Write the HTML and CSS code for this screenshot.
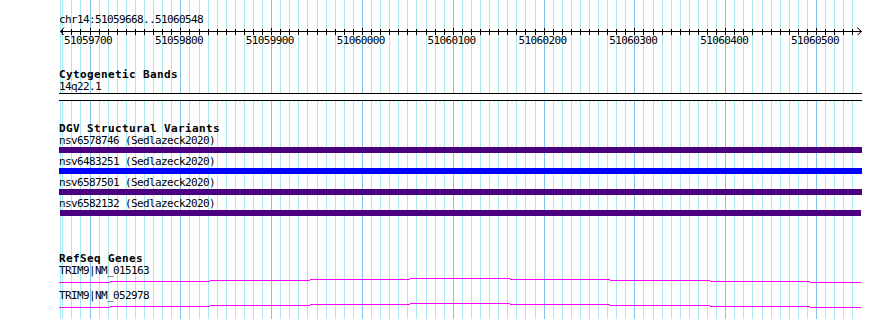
FILE: index.html
```html
<!DOCTYPE html>
<html>
<head>
<meta charset="utf-8">
<link rel="stylesheet" href="styles.css">
</head>
<body>
<div class="browser">
  <svg class="grid" width="890" height="319" viewBox="0 0 890 319" shape-rendering="crispEdges">
    <path class="minor" d="M60.5 0V319M62.5 0V319M71.5 0V319M80.5 0V319M99.5 0V319M108.5 0V319M117.5 0V319M126.5 0V319M135.5 0V319M144.5 0V319M153.5 0V319M162.5 0V319M171.5 0V319M189.5 0V319M199.5 0V319M208.5 0V319M217.5 0V319M226.5 0V319M235.5 0V319M244.5 0V319M253.5 0V319M262.5 0V319M280.5 0V319M289.5 0V319M298.5 0V319M307.5 0V319M317.5 0V319M326.5 0V319M335.5 0V319M344.5 0V319M353.5 0V319M371.5 0V319M380.5 0V319M389.5 0V319M398.5 0V319M407.5 0V319M416.5 0V319M426.5 0V319M435.5 0V319M444.5 0V319M462.5 0V319M471.5 0V319M480.5 0V319M489.5 0V319M498.5 0V319M507.5 0V319M516.5 0V319M525.5 0V319M535.5 0V319M553.5 0V319M562.5 0V319M571.5 0V319M580.5 0V319M589.5 0V319M598.5 0V319M607.5 0V319M616.5 0V319M625.5 0V319M643.5 0V319M653.5 0V319M662.5 0V319M671.5 0V319M680.5 0V319M689.5 0V319M698.5 0V319M707.5 0V319M716.5 0V319M734.5 0V319M743.5 0V319M752.5 0V319M762.5 0V319M771.5 0V319M780.5 0V319M789.5 0V319M798.5 0V319M807.5 0V319M825.5 0V319M834.5 0V319M843.5 0V319M852.5 0V319"/>
    <path class="major" d="M90.5 0V319M180.5 0V319M271.5 0V319M362.5 0V319M453.5 0V319M544.5 0V319M634.5 0V319M725.5 0V319M816.5 0V319"/>
  </svg>

  <div class="ruler">
    <div class="ruler-title">chr14:51059668..51060548</div>
    <svg class="axis" width="890" height="9" viewBox="0 0 890 9">
      <path class="axis-line" shape-rendering="crispEdges" d="M60 5.5H862M62.5 3V9M71.5 3V9M80.5 3V9M90.5 2V9M99.5 3V9M108.5 3V9M117.5 3V9M126.5 3V9M135.5 3V9M144.5 3V9M153.5 3V9M162.5 3V9M171.5 3V9M180.5 2V9M189.5 3V9M199.5 3V9M208.5 3V9M217.5 3V9M226.5 3V9M235.5 3V9M244.5 3V9M253.5 3V9M262.5 3V9M271.5 2V9M280.5 3V9M289.5 3V9M298.5 3V9M307.5 3V9M317.5 3V9M326.5 3V9M335.5 3V9M344.5 3V9M353.5 3V9M362.5 2V9M371.5 3V9M380.5 3V9M389.5 3V9M398.5 3V9M407.5 3V9M416.5 3V9M426.5 3V9M435.5 3V9M444.5 3V9M453.5 2V9M462.5 3V9M471.5 3V9M480.5 3V9M489.5 3V9M498.5 3V9M507.5 3V9M516.5 3V9M525.5 3V9M535.5 3V9M544.5 2V9M553.5 3V9M562.5 3V9M571.5 3V9M580.5 3V9M589.5 3V9M598.5 3V9M607.5 3V9M616.5 3V9M625.5 3V9M634.5 2V9M643.5 3V9M653.5 3V9M662.5 3V9M671.5 3V9M680.5 3V9M689.5 3V9M698.5 3V9M707.5 3V9M716.5 3V9M725.5 2V9M734.5 3V9M743.5 3V9M752.5 3V9M762.5 3V9M771.5 3V9M780.5 3V9M789.5 3V9M798.5 3V9M807.5 3V9M816.5 2V9M825.5 3V9M834.5 3V9M843.5 3V9M852.5 3V9"/>
      <path class="arrow" d="M64 1.5L60.5 5.5L64 9.5M857 1.5L861.5 5.5L857 9.5"/>
    </svg>
    <div class="tick-labels">
      <span>51059700</span><span>51059800</span><span>51059900</span><span>51060000</span><span>51060100</span><span>51060200</span><span>51060300</span><span>51060400</span><span>51060500</span>
    </div>
  </div>

  <section class="track track-cyto">
    <div class="track-title">Cytogenetic Bands</div>
    <div class="feature-label">14q22.1</div>
    <div class="band"></div>
  </section>

  <section class="track track-dgv">
    <div class="track-title">DGV Structural Variants</div>
    <div class="feature">
      <div class="feature-label">nsv6578746 (Sedlazeck2020)</div>
      <div class="bar bar-loss"></div>
    </div>
    <div class="feature">
      <div class="feature-label">nsv6483251 (Sedlazeck2020)</div>
      <div class="bar bar-gain"></div>
    </div>
    <div class="feature">
      <div class="feature-label">nsv6587501 (Sedlazeck2020)</div>
      <div class="bar bar-loss"></div>
    </div>
    <div class="feature">
      <div class="feature-label">nsv6582132 (Sedlazeck2020)</div>
      <div class="bar bar-loss bar-inset"></div>
    </div>
  </section>

  <section class="track track-genes">
    <div class="track-title">RefSeq Genes</div>
    <div class="gene">
      <div class="feature-label">TRIM9|NM_015163</div>
      <svg class="gene-line" width="803" height="13" viewBox="0 0 803 13" shape-rendering="crispEdges">
        <path d="M0 5.5H51M51 4.5H151M151 3.5H251M251 2.5H351M351 1.5H451M451 2.5H551M551 3.5H651M651 4.5H751M751 5.5H802"/>
      </svg>
    </div>
    <div class="gene">
      <div class="feature-label">TRIM9|NM_052978</div>
      <svg class="gene-line" width="803" height="13" viewBox="0 0 803 13" shape-rendering="crispEdges">
        <path d="M0 5.5H51M51 4.5H151M151 3.5H251M251 2.5H351M351 1.5H451M451 2.5H551M551 3.5H651M651 4.5H751M751 5.5H802"/>
      </svg>
    </div>
  </section>
</div>
</body>
</html>
```

FILE: styles.css
```css
html, body {
  margin: 0;
  padding: 0;
  background: #ffffff;
}

.browser {
  position: relative;
  width: 890px;
  height: 319px;
  overflow: hidden;
  font-family: "DejaVu Sans Mono", "Liberation Mono", monospace;
  font-size: 11px;
  color: #000;
}

.grid {
  position: absolute;
  left: 0;
  top: 0;
  z-index: 0;
}

.grid .minor {
  stroke: #a8e8ee;
  stroke-width: 1;
  fill: none;
}

.grid .major {
  stroke: #80c4ec;
  stroke-width: 1;
  fill: none;
}

.ruler,
.track {
  position: relative;
  z-index: 1;
}

.ruler {
  padding-top: 14px;
}

.ruler-title,
.feature-label {
  line-height: 12px;
  height: 12px;
  letter-spacing: -0.62px;
  white-space: nowrap;
}

.ruler-title {
  padding-left: 59px;
}

.axis {
  display: block;
}

.axis-line {
  stroke: #000;
  stroke-width: 1;
  fill: none;
}

.arrow {
  stroke: #000;
  stroke-width: 1;
  fill: none;
}

.tick-labels {
  display: flex;
  justify-content: space-between;
  margin-left: 64px;
  width: 775px;
  line-height: 12px;
  height: 12px;
  letter-spacing: -0.62px;
}

.tick-labels span {
  width: 48px;
  white-space: nowrap;
}

.track {
  padding-left: 59px;
}

.track-title {
  font-weight: bold;
  line-height: 12px;
  height: 12px;
  letter-spacing: 0.38px;
  white-space: nowrap;
}

.track-cyto {
  margin-top: 22px;
}

.band {
  width: 803px;
  height: 6px;
  border-top: 1px solid #000;
  border-bottom: 1px solid #000;
  background: #fff;
}

.track-dgv {
  margin-top: 22px;
}

.feature {
  padding-bottom: 3px;
}

.bar {
  width: 803px;
  height: 6px;
}

.bar-loss {
  background: #4b0082;
}

.bar-gain {
  background: #0000ff;
}

.bar-inset {
  width: 801px;
  margin-left: 1px;
}

.track-genes {
  margin-top: 34px;
}

.gene-line {
  display: block;
}

.gene-line path {
  stroke: #ff00ff;
  stroke-width: 1;
  fill: none;
}
```
